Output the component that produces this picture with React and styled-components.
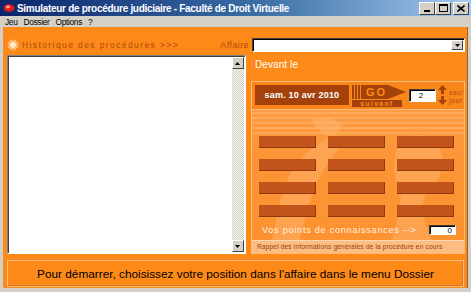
import React from 'react';
import styled, { createGlobalStyle } from 'styled-components';

const ORANGE = '#fd8a18';
const RUST = '#a5420c';
const BROWN_TEXT = '#b0470f';
const LIGHT_LINE = '#ffbd7c';

const GlobalStyle = createGlobalStyle`
  html, body { margin: 0; padding: 0; background: #d4d0c8; }
  body { font-family: "Liberation Sans", Arial, sans-serif; }
  * { box-sizing: border-box; }
`;

const Window = styled.div`
  width: 471px;
  height: 292px;
  background: #d4d0c8;
  display: flex;
  flex-direction: column;
  overflow: hidden;
`;

const TitleBar = styled.div`
  height: 16px;
  display: flex;
  align-items: center;
  padding: 0 2px 0 3px;
  background: linear-gradient(90deg, #0a246a 0%, #3a6ea5 55%, #a6caf0 100%);
  color: #fff;
  font-weight: bold;
  font-size: 10px;
  letter-spacing: -0.3px;
`;

const TitleText = styled.span`
  flex: 1;
  margin-left: 2px;
  white-space: nowrap;
`;

const WinButtons = styled.div`
  display: flex;
`;

const WinButton = styled.div`
  width: 16px;
  height: 13px;
  margin-left: ${(p) => (p.$gap ? '2px' : '0')};
  background: #d4d0c8;
  border: 1px solid;
  border-color: #fff #404040 #404040 #fff;
  display: flex;
  align-items: center;
  justify-content: center;
`;

const MenuBar = styled.div`
  height: 11px;
  display: flex;
  align-items: center;
  gap: 6px;
  padding-left: 5px;
  font-size: 8.3px;
  color: #000;
  letter-spacing: -0.3px;
`;

const Body = styled.div`
  flex: 1;
  margin: 0 3px 4px 3px;
  background: ${ORANGE};
  border-right: 1px solid #8d6440;
  display: flex;
  flex-direction: column;
  padding: 11px 2px 0 4px;
`;

const HeaderRow = styled.div`
  display: flex;
  align-items: center;
  height: 14px;
`;

const SectionTitle = styled.span`
  color: ${BROWN_TEXT};
  font-size: 8.5px;
  letter-spacing: 1.4px;
  margin-left: 3px;
  white-space: nowrap;
`;

const Label = styled.span`
  color: ${BROWN_TEXT};
  font-size: 9px;
  letter-spacing: 0.4px;
  margin-left: auto;
  margin-right: 3px;
`;

const Select = styled.div`
  width: 213px;
  height: 14px;
  background: #fff;
  border: 1px solid;
  border-color: #404040 #fff #fff #404040;
  box-shadow: inset 1px 1px 0 #000;
  display: flex;
  justify-content: flex-end;
  padding: 1px;
`;

const DropButton = styled.div`
  width: 12px;
  height: 10px;
  background: #d4d0c8;
  border: 1px solid;
  border-color: #fff #404040 #404040 #fff;
  display: flex;
  align-items: center;
  justify-content: center;
`;

const Main = styled.div`
  display: flex;
  gap: 5px;
  margin-top: 3px;
  height: 199px;
`;

const ListBox = styled.div`
  width: 240px;
  background: #fff;
  border: 1px solid;
  border-color: #808080 #fff #fff #808080;
  box-shadow: inset 1px 1px 0 #404040;
  display: flex;
  justify-content: flex-end;
  padding: 1px;
`;

const ScrollTrack = styled.div`
  width: 12px;
  display: flex;
  flex-direction: column;
  justify-content: space-between;
  background-color: #eeeeea;
  background-image: repeating-conic-gradient(#d4d0c8 0 25%, #f4f4f0 0 50%);
  background-size: 2px 2px;
`;

const ScrollArrow = styled.div`
  height: 12px;
  background: #d4d0c8;
  border: 1px solid;
  border-color: #fff #404040 #404040 #fff;
  display: flex;
  align-items: center;
  justify-content: center;
`;

const RightCol = styled.div`
  width: 215px;
  display: flex;
  flex-direction: column;
`;

const Devant = styled.div`
  color: #fff;
  font-size: 10px;
  letter-spacing: 0.1px;
  padding: 4px 0 0 4px;
  height: 26px;
`;

const Panel = styled.div`
  flex: 1;
  border: 1px solid ${LIGHT_LINE};
  display: flex;
  flex-direction: column;
`;

const DateStrip = styled.div`
  height: 28px;
  display: flex;
  align-items: flex-start;
  padding: 3px 0 0 3px;
  background: #f8861a;
  border-bottom: 1px solid ${LIGHT_LINE};
`;

const DateBox = styled.div`
  width: 94px;
  height: 20px;
  background: ${RUST};
  color: #fff;
  font-weight: bold;
  font-size: 9px;
  letter-spacing: 0.2px;
  display: flex;
  align-items: center;
  justify-content: center;
`;

const GoBlock = styled.div`
  margin-left: 3px;
  display: flex;
  flex-direction: column;
  gap: 1px;
`;

const GoTop = styled.div`
  display: flex;
  height: 14px;
`;

const Stripe = styled.div`
  width: 2px;
  height: 14px;
  background: ${RUST};
  margin-right: 1px;
`;

const GoArrow = styled.div`
  width: 45px;
  height: 14px;
  background: ${RUST};
  clip-path: polygon(0 0, 60% 0, 100% 50%, 60% 100%, 0 100%);
  color: ${ORANGE};
  font-size: 11px;
  font-weight: bold;
  letter-spacing: 2px;
  padding-left: 5px;
  line-height: 14px;
`;

const Suivant = styled.div`
  width: 50px;
  height: 7px;
  background: ${RUST};
  color: ${ORANGE};
  font-size: 7px;
  font-weight: bold;
  letter-spacing: 1.3px;
  line-height: 7px;
  text-align: center;
`;

const SmallInput = styled.div`
  width: ${(p) => p.$w}px;
  height: ${(p) => p.$h}px;
  background: #fff;
  border: 1px solid;
  border-color: #404040 #fff #fff #404040;
  box-shadow: inset 1px 1px 0 #000;
  font-size: 8px;
  color: #000;
  display: flex;
  align-items: center;
  justify-content: ${(p) => p.$align};
  padding-right: 3px;
`;

const SpeedInput = styled(SmallInput)`
  margin: 4px 0 0 3px;
`;

const Arrows = styled.div`
  margin-left: 2px;
  display: flex;
  flex-direction: column;
  gap: 2px;
`;

const SecJour = styled.div`
  margin-left: 2px;
  padding-top: 4px;
  color: ${BROWN_TEXT};
  font-size: 6.8px;
  letter-spacing: 0.6px;
  line-height: 8px;
`;

const Stage = styled.div`
  position: relative;
  height: 130px;
  overflow: hidden;
  background:
    repeating-linear-gradient(180deg, rgba(255, 200, 140, 0.35) 0 2px, transparent 2px 5px) 0 2px / 100% 22px no-repeat,
    linear-gradient(180deg, #fd9c44 0%, #fd9435 40%, #fc9230 100%);
  padding: 26px 8px 0 7px;
`;

const Silhouette = styled.svg`
  position: absolute;
  inset: 0;
`;

const BarGrid = styled.div`
  position: relative;
  display: grid;
  grid-template-columns: repeat(3, 57px);
  grid-auto-rows: 12px;
  column-gap: 12px;
  row-gap: 11px;
`;

const Bar = styled.div`
  background: #c2541b;
  border-bottom: 1px solid #8f3a0c;
  border-right: 1px solid #8f3a0c;
`;

const PointsRow = styled.div`
  position: relative;
  display: flex;
  align-items: center;
  margin-top: 8px;
  padding-left: 3px;
`;

const PointsText = styled.span`
  color: #fff2e4;
  font-size: 9px;
  letter-spacing: 0.8px;
  flex: 1;
`;

const Rappel = styled.div`
  height: 13px;
  background: #fbbd83;
  border-top: 1px solid #ffd7ae;
  color: #9c3d0b;
  font-size: 6.6px;
  letter-spacing: 0.15px;
  line-height: 12px;
  padding-left: 5px;
  white-space: nowrap;
`;

const StatusBar = styled.div`
  margin: 6px 1px 0 0;
  height: 27px;
  border: 1px solid ${LIGHT_LINE};
  box-shadow: inset -1px -1px 0 #e0741a;
  display: flex;
  align-items: center;
  justify-content: center;
  color: #000;
  font-size: 11.8px;
`;

const Tri = ({ up, size = 5, color = '#000' }) => (
  <svg width={size * 2 - 1} height={size} viewBox={`0 0 ${size * 2 - 1} ${size}`}>
    <polygon
      points={up ? `0,${size} ${size - 0.5},0 ${size * 2 - 1},${size}` : `0,0 ${size - 0.5},${size} ${size * 2 - 1},0`}
      fill={color}
    />
  </svg>
);

const Star = () => (
  <svg width="12" height="12" viewBox="0 0 12 12">
    <g stroke="#ffd9a8" strokeWidth="1.2">
      {[0, 30, 60, 90, 120, 150].map((a) => (
        <line key={a} x1="6" y1="0.5" x2="6" y2="11.5" transform={`rotate(${a} 6 6)`} />
      ))}
    </g>
    <circle cx="6" cy="6" r="3" fill="#ffe6c4" />
  </svg>
);

const AppIcon = () => (
  <svg width="12" height="10" viewBox="0 0 12 10">
    <ellipse cx="6" cy="5" rx="5.5" ry="3.8" fill="#e01a1a" />
    <ellipse cx="5" cy="4" rx="2.2" ry="1.4" fill="#ff9a9a" />
  </svg>
);

const SpeedArrow = ({ up }) => (
  <svg width="9" height="9" viewBox="0 0 9 9">
    {up ? (
      <>
        <polygon points="0,5 4.5,0 9,5" fill={RUST} />
        <rect x="3" y="5" width="3" height="4" fill={RUST} />
      </>
    ) : (
      <>
        <rect x="3" y="0" width="3" height="4" fill={RUST} />
        <polygon points="0,4 4.5,9 9,4" fill={RUST} />
      </>
    )}
  </svg>
);

const bars = Array.from({ length: 12 });

export default function App() {
  return (
    <>
      <GlobalStyle />
      <Window>
        <TitleBar>
          <AppIcon />
          <TitleText>Simulateur de procédure judiciaire - Faculté de Droit Virtuelle</TitleText>
          <WinButtons>
            <WinButton>
              <svg width="8" height="7" viewBox="0 0 8 7">
                <rect x="1" y="5" width="6" height="2" fill="#000" />
              </svg>
            </WinButton>
            <WinButton>
              <svg width="9" height="8" viewBox="0 0 9 8">
                <rect x="0.5" y="0.5" width="8" height="7" fill="none" stroke="#000" />
                <rect x="0" y="0" width="9" height="2" fill="#000" />
              </svg>
            </WinButton>
            <WinButton $gap>
              <svg width="8" height="7" viewBox="0 0 8 7">
                <path d="M0.5 0.5 L7.5 6.5 M7.5 0.5 L0.5 6.5" stroke="#000" strokeWidth="1.6" />
              </svg>
            </WinButton>
          </WinButtons>
        </TitleBar>
        <MenuBar>
          <span>Jeu</span>
          <span>Dossier</span>
          <span>Options</span>
          <span>?</span>
        </MenuBar>
        <Body>
          <HeaderRow>
            <Star />
            <SectionTitle>Historique des procédures &gt;&gt;&gt;</SectionTitle>
            <Label>Affaire</Label>
            <Select>
              <DropButton>
                <Tri size={3} />
              </DropButton>
            </Select>
          </HeaderRow>
          <Main>
            <ListBox>
              <ScrollTrack>
                <ScrollArrow>
                  <Tri up size={3} />
                </ScrollArrow>
                <ScrollArrow>
                  <Tri size={3} />
                </ScrollArrow>
              </ScrollTrack>
            </ListBox>
            <RightCol>
              <Devant>Devant le</Devant>
              <Panel>
                <DateStrip>
                  <DateBox>sam. 10 avr 2010</DateBox>
                  <GoBlock>
                    <GoTop>
                      <Stripe />
                      <Stripe />
                      <Stripe />
                      <GoArrow>GO</GoArrow>
                    </GoTop>
                    <Suivant>suivant</Suivant>
                  </GoBlock>
                  <SpeedInput $w={27} $h={13} $align="center">2</SpeedInput>
                  <Arrows>
                    <SpeedArrow up />
                    <SpeedArrow />
                  </Arrows>
                  <SecJour>
                    sec/
                    <br />
                    jour
                  </SecJour>
                </DateStrip>
                <Stage>
                  <Silhouette width="213" height="130" viewBox="0 0 213 130">
                    <g fill="#ffb877" opacity="0.45">
                      <path d="M40 60 C 55 40, 70 30, 85 25 L 95 30 C 80 45, 70 60, 62 80 C 55 100, 50 120, 48 130 L 20 130 C 25 105, 30 80, 40 60 Z" />
                      <path d="M60 10 C 70 5, 85 8, 90 18 L 80 28 C 72 24, 64 20, 60 10 Z" />
                      <path d="M150 30 C 165 20, 185 25, 190 45 C 193 60, 185 75, 175 80 C 168 95, 170 110, 180 130 L 140 130 C 145 110, 150 95, 148 80 C 140 65, 140 42, 150 30 Z" />
                    </g>
                  </Silhouette>
                  <BarGrid>
                    {bars.map((_, i) => (
                      <Bar key={i} />
                    ))}
                  </BarGrid>
                  <PointsRow>
                    <PointsText>Vos points de connaissances --&gt;</PointsText>
                    <SmallInput $w={27} $h={10} $align="flex-end">0</SmallInput>
                  </PointsRow>
                </Stage>
                <Rappel>Rappel des informations générales de la procédure en cours</Rappel>
              </Panel>
            </RightCol>
          </Main>
          <StatusBar>Pour démarrer, choisissez votre position dans l'affaire dans le menu Dossier</StatusBar>
        </Body>
      </Window>
    </>
  );
}
